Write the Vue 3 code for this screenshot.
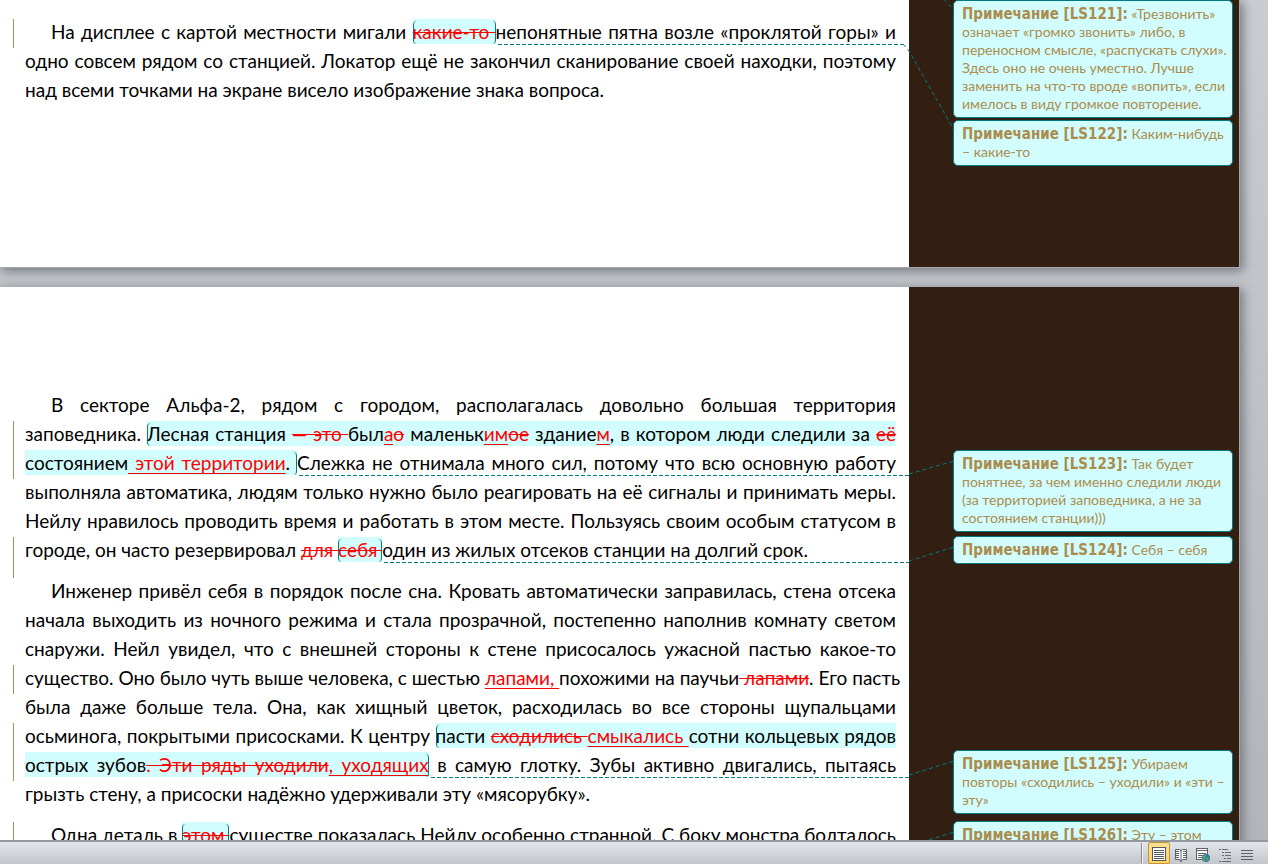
<script setup>
const h = (t, c = '') => ({ t, c: 'hl ' + c })
const p = (t) => ({ t, c: '' })
const del = (t, c = '') => ({ tag: 'del', t, c })
const ins = (t, c = '') => ({ tag: 'ins', t, c })

const firstPage = [
  [
    {
      bar: true,
      s: [p('На дисплее с картой местности мигали '), del('какие-то ', 'hl open close'), p('непонятные пятна возле «проклятой горы» и')],
    },
    { s: [p('одно совсем рядом со станцией. Локатор ещё не закончил сканирование своей находки, поэтому')] },
    { s: [p('над всеми точками на экране висело изображение знака вопроса.')] },
  ],
]

const secondPage = [
  [
    { s: [p('В секторе Альфа-2, рядом с городом, располагалась довольно большая территория')] },
    {
      bar: true,
      s: [
        p('заповедника. '), h('Лесная станция ', 'open'), del('— это ', 'hl'), h('был'), ins('а', 'hl'), del('о', 'hl'),
        h(' маленьк'), ins('им', 'hl'), del('ое', 'hl'), h(' здание'), ins('м', 'hl'),
        h(', в котором люди следили за '), del('её', 'hl'),
      ],
    },
    {
      bar: true,
      s: [
        h('состоянием'), ins(' этой территории', 'hl'), h('. ', 'close'),
        p('Слежка не отнимала много сил, потому что всю основную работу'),
      ],
    },
    { s: [p('выполняла автоматика, людям только нужно было реагировать на её сигналы и принимать меры.')] },
    { s: [p('Нейлу нравилось проводить время и работать в этом месте. Пользуясь своим особым статусом в')] },
    {
      bar: true,
      s: [
        p('городе, он часто резервировал '), del('для '), del('себя ', 'hl open close'),
        p('один из жилых отсеков станции на долгий срок.'),
      ],
    },
  ],
  [
    { s: [p('Инженер привёл себя в порядок после сна. Кровать автоматически заправилась, стена отсека')] },
    { s: [p('начала выходить из ночного режима и стала прозрачной, постепенно наполнив комнату светом')] },
    { s: [p('снаружи. Нейл увидел, что с внешней стороны к стене присосалось ужасной пастью какое-то')] },
    {
      bar: true,
      s: [
        p('существо. Оно было чуть выше человека, с шестью '), ins('лапами, '), p('похожими на паучьи'),
        del(' лапами'), p('. Его пасть'),
      ],
    },
    { s: [p('была даже больше тела. Она, как хищный цветок, расходилась во все стороны щупальцами')] },
    {
      bar: true,
      s: [
        p('осьминога, покрытыми присосками. К центру '), h('пасти ', 'open'), del('сходились ', 'hl'),
        ins('смыкались ', 'hl'), h('сотни кольцевых рядов'),
      ],
    },
    {
      bar: true,
      s: [
        h('острых зубов'), del('. Эти ряды уходили', 'hl'), ins(', уходящих', 'hl close'),
        p(' в самую глотку. Зубы активно двигались, пытаясь'),
      ],
    },
    { s: [p('грызть стену, а присоски надёжно удерживали эту «мясорубку».')] },
  ],
  [
    {
      bar: true,
      s: [
        p('Одна деталь в '), del('этом ', 'hl open close'),
        p('существе показалась Нейлу особенно странной. С боку монстра болталось'),
      ],
    },
  ],
]

const pages = [
  {
    name: 'upper',
    paragraphs: firstPage,
    notes: [
      {
        id: 'LS121',
        lines: ['«Трезвонить»', 'означает «громко звонить» либо, в', 'переносном смысле, «распускать слухи».', 'Здесь оно не очень уместно. Лучше', 'заменить на что-то вроде «вопить», если', 'имелось в виду громкое повторение.'],
      },
      { id: 'LS122', lines: ['Каким-нибудь', '– какие-то'] },
    ],
    links: ['M33 -6 L48 10', 'M-3 44 L3 51 L48 130'],
  },
  {
    name: 'lower',
    paragraphs: secondPage,
    notes: [
      {
        id: 'LS123',
        lines: ['Так будет', 'понятнее, за чем именно следили люди', '(за территорией заповедника, а не за', 'состоянием станции)))'],
      },
      { id: 'LS124', lines: ['Себя – себя'] },
      { id: 'LS125', lines: ['Убираем', 'повторы «сходились – уходили» и «эти –', 'эту»'] },
      { id: 'LS126', lines: ['Эту – этом'] },
    ],
    links: ['M3 187 L48 174', 'M3 274 L48 260', 'M3 488 L48 474', 'M3 559 L48 545'],
  },
]
</script>

<template>
  <div class="window">
    <main class="canvas">
      <article v-for="page in pages" :key="page.name" class="sheet" :class="page.name">
        <div class="body">
          <p v-for="(para, i) in page.paragraphs" :key="i">
            <span v-for="(line, j) in para" :key="j" class="line" :class="{ changed: line.bar }"><component :is="seg.tag || 'span'" v-for="(seg, k) in line.s" :key="k" :class="seg.c">{{ seg.t }}<i v-if="seg.c.includes('close')" class="leader"></i></component></span>
          </p>
        </div>
        <aside class="margin">
          <section v-for="note in page.notes" :key="note.id" class="note" :class="note.id">
            <span v-for="(text, n) in note.lines" :key="n" class="row"><template v-if="n === 0"><b>Примечание [{{ note.id }}]:</b>&nbsp;</template>{{ text }}</span>
          </section>
          <svg class="links" width="48" height="553" aria-hidden="true">
            <path v-for="d in page.links" :key="d" :d="d" />
          </svg>
        </aside>
      </article>
    </main>
    <footer class="status">
      <button type="button" class="active" aria-label="Разметка страницы">
        <svg width="16" height="16" viewBox="0 0 16 16">
          <rect x="1.5" y="1.5" width="13" height="13" fill="#fff" stroke="#55585c" />
          <path d="M3 4.5h10M3 6.5h10M3 8.5h10M3 10.5h10M3 12.5h10" stroke="#55585c" />
        </svg>
      </button>
      <button type="button" aria-label="Режим чтения">
        <svg width="16" height="16" viewBox="0 0 16 16">
          <path d="M2.5 2.5h4l1.5 1 1.5-1h4v10h-4l-1.5 2-1.5-2h-4z" fill="#fff" stroke="#5d6064" />
          <path d="M8 3v12M3 4.5h3M3 6.5h3M3 8.5h3M3 10.5h3M10 4.5h3M10 6.5h3M10 8.5h3M10 10.5h3" stroke="#5d6064" />
        </svg>
      </button>
      <button type="button" aria-label="Веб-документ">
        <svg width="16" height="16" viewBox="0 0 16 16">
          <rect x="1.5" y="1.5" width="11" height="11" fill="#fff" stroke="#5d6064" />
          <path d="M2 3.5h10M3 6.5h8M3 8.5h6M3 10.5h4" stroke="#5d6064" />
          <circle cx="11" cy="11" r="4" fill="#2f74ad" />
          <path d="M8.500 8.500c2-2 4 0 2 2s1 3-1 4c-2-1-2-4-1-6zM12 10l2 1-1 3-2-1z" fill="#55ab62" />
        </svg>
      </button>
      <button type="button" aria-label="Структура">
        <svg width="16" height="16" viewBox="0 0 16 16">
          <path d="M2 2.5h2M5 2.5h6M5 5.5h2M8 5.5h6M5 8.5h2M8 8.5h6M7 11.500h2M10 11.5h4M2 14.5h2M5 14.5h9" stroke="#696c70" />
        </svg>
      </button>
      <button type="button" aria-label="Черновик">
        <svg width="16" height="16" viewBox="0 0 16 16">
          <path d="M2 3.5h12M2 6.5h12M2 9.5h12M2 12.5h12" stroke="#5d6064" />
        </svg>
      </button>
    </footer>
  </div>
</template>

<style>
body {
  margin: 0;
}
</style>

<style scoped>
.window {
  display: flex;
  flex-direction: column;
  height: 100vh;
  font-family: Lato, "Open Sans", sans-serif;
}
.canvas {
  flex: 1;
  min-height: 0;
  overflow: hidden;
  background: linear-gradient(#c9ccd1, #b2b5ba);
}
.sheet {
  display: flex;
  margin: 0 29px 20px 0;
  background: #fff;
  box-shadow: 1px 1px 0 #a4a7ab, 3px 3px 10px 1px #74787d;
}
.body {
  flex: 1;
  min-width: 0;
  box-sizing: border-box;
  overflow: hidden;
  padding: 17px 13px 163px 25px;
  font-size: 19px;
  line-height: 29px;
  color: #000;
}
.upper .body {
  clip-path: inset(0 6px 0 0);
}
.lower .body {
  padding-top: 103px;
}
p {
  margin: 0 0 12px;
}
.upper p {
  margin: 0;
}
.line {
  display: block;
  position: relative;
  white-space: nowrap;
  text-align: justify;
  text-align-last: justify;
}
.line:first-child {
  text-indent: 26px;
}
.line:last-child:not(:first-child) {
  text-align-last: left;
}
.changed::before {
  content: "";
  position: absolute;
  left: -12px;
  top: 2px;
  width: 1px;
  height: 29px;
  background: #a38f5f;
}
.changed:last-child::before {
  height: 41px;
}
del,
ins {
  color: #f00;
  text-decoration-thickness: 1px;
  text-decoration-skip-ink: none;
}
ins {
  text-underline-offset: 3px;
}
.hl {
  position: relative;
  padding: 1px 0;
  background: #d2fdfe;
  text-indent: 0;
}
.open::before,
.close::after {
  content: "";
  position: absolute;
  top: 2px;
  bottom: 0;
  width: 4px;
  box-sizing: border-box;
}
.open::before {
  left: 0;
  border-left: 1px solid #007c80;
  border-radius: 4px 0 0 4px;
}
.close::after {
  right: 0;
  border-right: 1px solid #007c80;
  border-radius: 0 4px 4px 0;
}
.leader {
  position: absolute;
  left: 100%;
  bottom: -1px;
  width: 100vw;
  height: 1px;
  margin-left: 2px;
  background: repeating-linear-gradient(90deg, #007c80 0 4px, transparent 4px 6px);
}
.margin {
  position: relative;
  flex: 0 0 280px;
  padding: 0 6px 0 44px;
  background: #331f12;
}
.note {
  box-sizing: border-box;
  margin-bottom: 2px;
  padding: 4px 0 4px 8px;
  border: 1px solid #007c80;
  border-radius: 5px;
  background: #d2fdfe;
  color: #ab8c4c;
  font-size: 14px;
  line-height: 18px;
}
.row {
  display: block;
  white-space: nowrap;
}
.row b {
  font-family: "DejaVu Sans Condensed", "DejaVu Sans", sans-serif;
  font-size: 15px;
}
.LS123 {
  margin-top: 163px;
  margin-bottom: 4px;
}
.LS124 {
  margin-bottom: 186px;
}
.LS125 {
  margin-bottom: 7px;
}
.links {
  position: absolute;
  left: -3px;
  top: 0;
  overflow: visible;
}
.links path {
  fill: none;
  stroke: #007c80;
  stroke-dasharray: 4 3;
}
.status {
  display: flex;
  justify-content: flex-end;
  align-items: center;
  box-sizing: border-box;
  height: 24px;
  padding-right: 10px;
  border-top: 2px solid #9297a0;
  background: linear-gradient(#e2e5ea, #c3c6cb);
}
.status::before {
  content: "";
  width: 1px;
  height: 20px;
  margin-right: 5px;
  border-right: 1px solid #f2f3f5;
  background: #888c92;
}
.status button {
  display: grid;
  place-items: center;
  box-sizing: border-box;
  width: 22px;
  height: 22px;
  padding: 3px 0 0;
  border: 0;
  background: none;
}
.status .active {
  padding-top: 1px;
  border: 1px solid #c29436;
  border-radius: 2px;
  background: linear-gradient(#fbdf92, #fdd462);
}
</style>
